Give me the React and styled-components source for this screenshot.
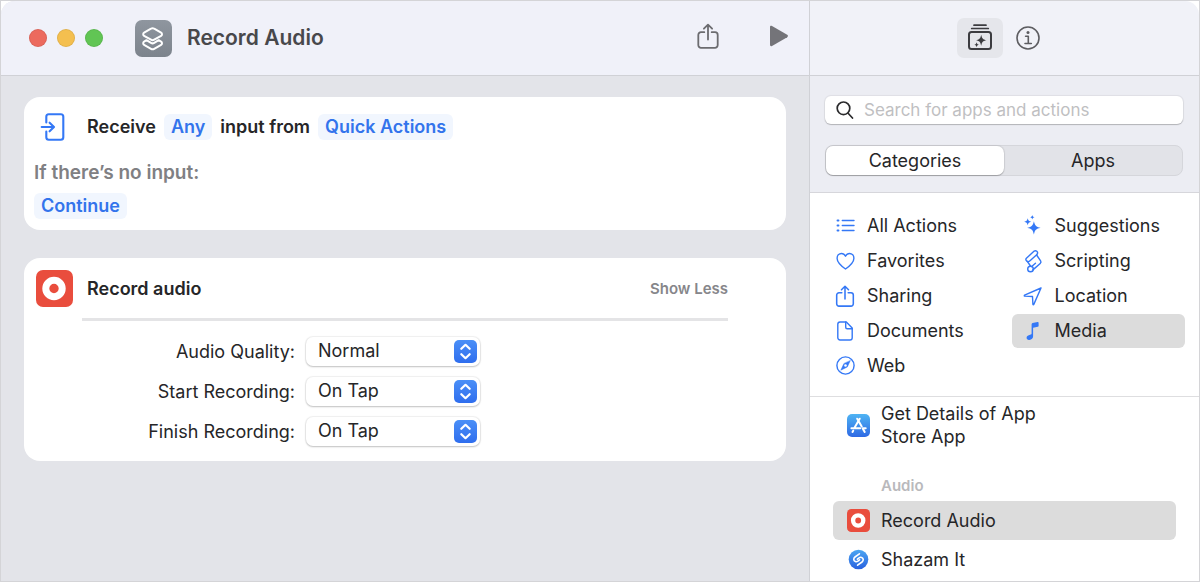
import { useState } from "react";
import styled, { createGlobalStyle } from "styled-components";

const categories = [
  { name: "All Actions", icon: ListIcon },
  { name: "Favorites", icon: HeartIcon },
  { name: "Sharing", icon: ShareIcon },
  { name: "Documents", icon: DocumentIcon },
  { name: "Web", icon: CompassIcon },
  { name: "Suggestions", icon: SparklesIcon },
  { name: "Scripting", icon: ScrollIcon },
  { name: "Location", icon: LocationIcon },
  { name: "Media", icon: NoteIcon },
];

const settings = [
  { id: "quality", label: "Audio Quality:", options: ["Normal", "Very High"] },
  { id: "start", label: "Start Recording:", options: ["On Tap", "Immediately"] },
  { id: "finish", label: "Finish Recording:", options: ["On Tap", "After Time"] },
];

export default function App() {
  const [tab, setTab] = useState("Categories");
  const [category, setCategory] = useState("Media");
  const [action, setAction] = useState("Record Audio");

  return (
    <>
      <GlobalStyle />
      <Window>
        <Editor>
          <TitleBar>
            <Lights>
              <Light color="#ec6a5e" aria-label="Close" />
              <Light color="#f4bf4f" aria-label="Minimize" />
              <Light color="#61c554" aria-label="Zoom" />
            </Lights>
            <ShortcutIcon />
            <Title>Record Audio</Title>
            <ToolButtons>
              <IconButton aria-label="Share">
                <ShareIcon size={28} color="#6c6c70" />
              </IconButton>
              <IconButton aria-label="Run">
                <PlayIcon />
              </IconButton>
            </ToolButtons>
          </TitleBar>

          <Canvas>
            <InputCard>
              <Sentence>
                <InputIcon />
                <span>Receive</span>
                <Token>Any</Token>
                <span>input from</span>
                <Token>Quick Actions</Token>
              </Sentence>
              <NoInput>If there’s no input:</NoInput>
              <Token>Continue</Token>
            </InputCard>

            <ActionCard>
              <ActionHeader>
                <RecordIcon size={37} />
                <ActionName>Record audio</ActionName>
                <ShowLess>Show Less</ShowLess>
              </ActionHeader>
              <Divider />
              <Settings>
                {settings.map((s) => (
                  <Setting key={s.id}>
                    <label htmlFor={s.id}>{s.label}</label>
                    <SelectBox>
                      <Select id={s.id}>
                        {s.options.map((o) => (
                          <option key={o}>{o}</option>
                        ))}
                      </Select>
                      <Stepper>
                        <StepperIcon />
                      </Stepper>
                    </SelectBox>
                  </Setting>
                ))}
              </Settings>
            </ActionCard>
          </Canvas>
        </Editor>

        <Sidebar>
          <SideBar>
            <LibraryButton aria-label="Action library">
              <LibraryIcon />
            </LibraryButton>
            <IconButton aria-label="Details">
              <InfoIcon />
            </IconButton>
          </SideBar>

          <Filters>
            <Search>
              <SearchIcon />
              <SearchInput
                aria-label="Search for apps and actions"
                placeholder="Search for apps and actions"
              />
            </Search>
            <Segments>
              {["Categories", "Apps"].map((name) => (
                <Segment
                  key={name}
                  $active={tab === name}
                  onClick={() => setTab(name)}
                >
                  {name}
                </Segment>
              ))}
            </Segments>
          </Filters>

          <Categories>
            {categories.map(({ name, icon: Icon }) => (
              <Category
                key={name}
                $active={category === name}
                onClick={() => setCategory(name)}
              >
                <Icon />
                {name}
              </Category>
            ))}
          </Categories>

          <Actions>
            <Action
              $active={action === "App Store"}
              onClick={() => setAction("App Store")}
            >
              <AppStoreIcon />
              <ActionLabel>Get Details of App Store App</ActionLabel>
            </Action>
            <GroupName>Audio</GroupName>
            <Action
              $active={action === "Record Audio"}
              onClick={() => setAction("Record Audio")}
            >
              <RecordIcon size={23} />
              <ActionLabel>Record Audio</ActionLabel>
            </Action>
            <Action
              $active={action === "Shazam It"}
              onClick={() => setAction("Shazam It")}
            >
              <ShazamIcon />
              <ActionLabel>Shazam It</ActionLabel>
            </Action>
          </Actions>
        </Sidebar>
      </Window>
    </>
  );
}

function Line({ size = 20, box = 20, color = "#3478f6", width = 1.4, children }) {
  return (
    <svg
      width={size}
      height={size}
      viewBox={`0 0 ${box} ${box}`}
      fill="none"
      stroke={color}
      strokeWidth={width}
      strokeLinecap="round"
      strokeLinejoin="round"
      aria-hidden="true"
    >
      {children}
    </svg>
  );
}

function ListIcon() {
  return (
    <Line>
      <path d="M2.500 4.500h1M2.500 9.500h1M2.500 14.500h1" strokeWidth="1.900" />
      <path d="M7.300 4.500h11.700M7.300 9.500h11.700M7.300 14.500h11.700" />
    </Line>
  );
}

function HeartIcon() {
  return (
    <Line>
      <path d="M10.500 18C7 15.500 2.100 11.800 2.100 7.200 2.100 4.500 4 2.500 6.400 2.500c1.800 0 3.200 1 4.100 2.700.9-1.700 2.300-2.700 4.100-2.700 2.400 0 4.300 2 4.300 4.700C18.900 11.800 14 15.500 10.500 18z" />
    </Line>
  );
}

function ShareIcon({ size = 24, color }) {
  return (
    <Line size={size} box={28} color={color} width={1.8}>
      <path d="M10.300 10.200H7a2.700 2.700 0 0 0-2.700 2.700v10.200A2.700 2.700 0 0 0 7 25.800h14a2.700 2.700 0 0 0 2.700-2.700V12.900a2.700 2.700 0 0 0-2.700-2.700h-3.300" />
      <path d="M14 17.500V3M9.900 6.700 14 2.700l4.100 4" />
    </Line>
  );
}

function DocumentIcon() {
  return (
    <Line>
      <path d="M11.300 1H5a2.200 2.200 0 0 0-2.200 2.200v13.600A2.200 2.200 0 0 0 5 19h10a2.200 2.200 0 0 0 2.200-2.200V7z" />
      <path d="M10.700 1v5.200A1.500 1.500 0 0 0 12.200 7.700h5" />
    </Line>
  );
}

function CompassIcon() {
  return (
    <Line>
      <circle cx="10.500" cy="9.500" r="8.600" />
      <path d="M15.200 4.800 12.300 11 5.800 14.200 8.800 7.800z" fill="#3478f6" strokeWidth=".5" />
      <circle cx="10.500" cy="9.500" r="1.300" fill="#fff" stroke="none" />
    </Line>
  );
}

function SparklesIcon() {
  return (
    <svg width="22" height="22" viewBox="-1 -1 22 22" fill="#3478f6" aria-hidden="true">
      <path d="M10.900 5.200c1.100 4.500 2.100 5.500 6.700 6.600-4.600 1.100-5.600 2.100-6.700 6.700-1.100-4.600-2.100-5.600-6.700-6.700 4.600-1.100 5.600-2.100 6.700-6.600z" />
      <path d="M4.700 2.300c.6 2.300 1.200 2.900 3.500 3.500-2.300.6-2.900 1.200-3.500 3.500-.6-2.300-1.200-2.900-3.500-3.500 2.300-.6 2.900-1.200 3.500-3.500z" />
      <path d="M9.300-1c.4 1.500.8 1.800 2.300 2.200-1.500.4-1.900.8-2.300 2.300-.4-1.500-.8-1.900-2.300-2.300 1.500-.4 1.900-.7 2.300-2.200z" />
    </svg>
  );
}

function ScrollIcon() {
  return (
    <Line size={24} box={24}>
      <path d="M5.400 9.200 13.200 2.100c1.700-1.300 4.200.9 3.100 2.800-.2.400-.6.700-.9 1L9 11.800c-1.100 1-2.400 1-3.300.1-.9-.8-1-1.900-.3-2.700z" />
      <path d="m15.600 6 4 5.900c.6.900.4 1.900-.4 2.600l-7.300 6.400" />
      <path d="m6.300 12.400 3.200 4.600" />
      <circle cx="9.500" cy="20" r="2.800" />
      <path d="m10.700 17.500 3.800-3.300" />
    </Line>
  );
}

function LocationIcon() {
  return (
    <Line>
      <path d="M18 2 1.600 9.200c-.5.300-.4.900.2.900l7.700.4.400 7.700c0 .6.600.7.900.2z" />
    </Line>
  );
}

function NoteIcon() {
  return (
    <svg width="20" height="20" viewBox="0 0 20 20" fill="#3478f6" aria-hidden="true">
      <path d="M8.600 3.300c0-.7.400-1.100 1-1.300l5-1.100c.6-.1 1 .2 1 .8v3.200c0 .5-.3.800-.8.900l-4.700 1v8.500c0 2-1.500 3.400-3.700 3.700-1.700.2-2.800-.8-2.800-2.200 0-1.600 1.100-2.500 2.800-2.900l1.300-.3c.6-.1.900-.4.900-1z" />
    </svg>
  );
}

function ShortcutIcon() {
  return (
    <svg width="37" height="37" viewBox="0 0 37 37" fill="none" aria-hidden="true">
      <defs>
        <linearGradient id="shortcut" x2="0" y2="1">
          <stop stopColor="#8f969f" />
          <stop offset="1" stopColor="#7c838c" />
        </linearGradient>
      </defs>
      <rect width="37" height="37" rx="7" fill="url(#shortcut)" />
      <g stroke="#fff" strokeWidth="2" strokeLinejoin="round">
        <path d="m16 8.700-6.900 3.900c-1.200.7-1.200 2.500 0 3.200l6.900 3.900c1 .6 2.200.6 3.200 0l6.900-3.900c1.200-.7 1.200-2.500 0-3.200l-6.900-3.900c-1-.6-2.200-.6-3.200 0z" />
        <path d="m11.500 20.200-2.400 1.400c-1.200.7-1.200 2.500 0 3.200l6.900 4c1 .6 2.200.6 3.200 0l6.900-4c1.200-.7 1.200-2.500 0-3.200l-2.400-1.400-4.500 2.700c-1 .6-2.200.6-3.200 0z" />
      </g>
    </svg>
  );
}

function PlayIcon() {
  return (
    <svg width="20" height="22" viewBox="0 0 20 22" fill="#747479" aria-hidden="true">
      <path d="M1 2.200C1 .9 2 .6 3 1.100l15.200 8.700c1 .6 1 1.800 0 2.400L3 20.900c-1 .5-2 .2-2-1.100z" />
    </svg>
  );
}

function InputIcon() {
  return (
    <Line size={30} box={30} width={2.1}>
      <path d="M8.300 10.500V4.700a2.500 2.500 0 0 1 2.500-2.500h12a2.500 2.500 0 0 1 2.500 2.500v20.600a2.500 2.500 0 0 1-2.500 2.500h-12a2.500 2.500 0 0 1-2.500-2.500v-5.800" />
      <path d="M3.700 15h12M11.600 10.700 16 15l-4.400 4.300" />
    </Line>
  );
}

function RecordIcon({ size }) {
  return (
    <svg width={size} height={size} viewBox="0 0 37 37" aria-hidden="true">
      <rect width="37" height="37" rx="7" fill="#e94d3d" />
      <circle cx="18" cy="18.500" r="8.200" fill="none" stroke="#fff" strokeWidth="7" />
    </svg>
  );
}

function StepperIcon() {
  return (
    <Line size={23} box={23} color="#fff" width={2.2}>
      <path d="m7.300 8.800 4.200-4 4.200 4M7.300 14.200l4.200 4 4.200-4" />
    </Line>
  );
}

function LibraryIcon() {
  return (
    <Line size={28} box={28} color="#3c3c40" width={2}>
      <rect x="3" y="8" width="22" height="17" rx="2.500" />
      <path d="M5.700 4.500h16.600M8 1.200h12" strokeWidth="1.700" />
      <path
        d="M15.200 10.700c.9 3.900 1.600 4.600 5.200 5.500-3.600.9-4.300 1.600-5.200 5.500-.9-3.900-1.600-4.600-5.200-5.500 3.600-.9 4.300-1.600 5.200-5.500zM10.600 18.200c.4 1.700.8 2.100 2.400 2.500-1.600.4-2 .8-2.400 2.500-.4-1.700-.8-2.100-2.400-2.500 1.600-.4 2-.8 2.400-2.500z"
        fill="#3c3c40"
        stroke="none"
      />
    </Line>
  );
}

function InfoIcon() {
  return (
    <Line size={24} box={24} color="#5d5d61" width={1.6}>
      <circle cx="12" cy="12" r="11" />
      <path d="M9.600 10.200h2.700v7.200M9 17.500h6.300" />
      <circle cx="12" cy="6.500" r="1.500" fill="#5d5d61" stroke="none" />
    </Line>
  );
}

function SearchIcon() {
  return (
    <Line size={20} box={20} color="#2a2a2c" width={1.7}>
      <circle cx="8.500" cy="8.300" r="6.300" />
      <path d="m13.100 13.200 4.400 4.800" />
    </Line>
  );
}

function AppStoreIcon() {
  return (
    <svg width="23" height="23" viewBox="0 0 23 23" fill="none" aria-hidden="true">
      <defs>
        <linearGradient id="store" x2="0" y2="1">
          <stop stopColor="#4fb4f3" />
          <stop offset="1" stopColor="#2e69e4" />
        </linearGradient>
      </defs>
      <rect width="23" height="23" rx="5" fill="url(#store)" />
      <path
        d="m12.700 4.700-5.500 9.500M6.200 16.700l-.7 1.200M10.200 4.700l4.500 7.700M15.700 14.400l2 3.500M4.400 14.200h8.800M16.300 14.200h2.400"
        stroke="#fff"
        strokeWidth="2"
        strokeLinecap="round"
      />
    </svg>
  );
}

function ShazamIcon() {
  return (
    <svg width="23" height="23" viewBox="0 0 23 23" fill="none" aria-hidden="true">
      <defs>
        <linearGradient id="shazam" x2="0" y2="1">
          <stop stopColor="#4ba6f2" />
          <stop offset="1" stopColor="#2861df" />
        </linearGradient>
      </defs>
      <circle cx="11.500" cy="11.500" r="9.800" fill="url(#shazam)" />
      <path
        d="M12.400 5.800 8 9c-1.900 1.500-1.500 3.800.4 4.500 1 .4 1.900.1 2.600-.5l1.600-1.200M10.600 17.200 15 14c1.900-1.500 1.500-3.800-.4-4.500-1-.4-1.900-.1-2.600.5l-1.600 1.200"
        stroke="#fff"
        strokeWidth="1.600"
        strokeLinecap="round"
      />
    </svg>
  );
}

const GlobalStyle = createGlobalStyle`
  * {
    box-sizing: border-box;
  }

  body {
    margin: 0;
    background-color: white;
    color: #262628;
    font-family: Inter, "Liberation Sans", sans-serif;
    font-size: 18px;
    line-height: 22px;
  }

  button, input, select {
    margin: 0;
    padding: 0;
    border: none;
    background: none;
    color: inherit;
    font: inherit;
  }

  svg {
    display: block;
    flex-shrink: 0;
  }
`;

const Window = styled.div`
  min-height: 100vh;
  display: grid;
  grid-template-columns: minmax(0, 1fr) 390px;
  border: 1px solid #d4d4d7;
`;

const Editor = styled.main`
  display: flex;
  flex-direction: column;
  background-color: #e3e4e9;
  border-top-left-radius: 14px;
`;

const TitleBar = styled.header`
  height: 75px;
  display: flex;
  align-items: center;
  padding: 0 20px 0 28px;
  background-color: #f0f1f9;
  border-bottom: 1px solid #d0d1d6;
  border-top-left-radius: 14px;
`;

const Lights = styled.div`
  display: flex;
  gap: 10px;
  margin-right: 32px;
`;

const Light = styled.button`
  width: 18px;
  height: 18px;
  border-radius: 50%;
  background-color: ${(props) => props.color};
  box-shadow: inset 0 0 0 1px rgba(0, 0, 0, 0.08);
`;

const Title = styled.h1`
  margin: 0 0 0 15px;
  font-size: 21px;
  font-weight: 600;
  color: #48484b;
`;

const ToolButtons = styled.div`
  display: flex;
  align-items: center;
  gap: 47px;
  margin-left: auto;
  padding-bottom: 4px;
`;

const IconButton = styled.button`
  display: flex;
`;

const Canvas = styled.div`
  flex: 1;
  display: flex;
  flex-direction: column;
  gap: 28px;
  padding: 21px 23px;
`;

const Card = styled.section`
  border-radius: 16px;
  background-color: white;
`;

const InputCard = styled(Card)`
  padding: 15px 10px 11px;
  font-weight: 600;
`;

const Sentence = styled.div`
  display: flex;
  align-items: center;
  gap: 8px;

  svg {
    margin: 0 11px 0 4px;
  }
`;

const Token = styled.button`
  height: 26px;
  padding: 0 7px;
  border-radius: 6px;
  background-color: #f1f6fe;
  color: #3374ec;
  font-weight: 600;
`;

const NoInput = styled.p`
  margin: 20px 0 9px;
  color: #808083;
  font-size: 19px;
`;

const ActionCard = styled(Card)`
  padding: 12px 58px 15px 12px;
`;

const ActionHeader = styled.div`
  display: flex;
  align-items: center;
`;

const ActionName = styled.h2`
  margin: 0 auto 0 14px;
  font-size: 18px;
  font-weight: 600;
`;

const ShowLess = styled.button`
  color: #86868a;
  font-size: 15px;
  font-weight: 600;
`;

const Divider = styled.hr`
  height: 3px;
  margin: 11px 0 16px 46px;
  border: none;
  background-color: #e4e4e6;
`;

const Settings = styled.div`
  display: grid;
  gap: 11px;
`;

const Setting = styled.div`
  display: grid;
  grid-template-columns: 259px 174px;
  align-items: center;
  gap: 11px;
  text-align: right;
`;

const SelectBox = styled.div`
  position: relative;
`;

const Select = styled.select`
  display: block;
  width: 100%;
  height: 29px;
  padding: 0 32px 2px 12px;
  appearance: none;
  border-radius: 7px;
  background-color: white;
  box-shadow: 0 0 1px 1px rgba(0, 0, 0, 0.06), 0 1px 2px rgba(0, 0, 0, 0.2);
`;

const Stepper = styled.span`
  position: absolute;
  top: 3px;
  right: 3px;
  border-radius: 5px;
  background: linear-gradient(#4a8ff7, #2f6eee);
  pointer-events: none;
`;

const Sidebar = styled.aside`
  display: flex;
  flex-direction: column;
  border-left: 1px solid #d0d1d6;
  border-top-right-radius: 14px;
`;

const SideBar = styled.header`
  height: 75px;
  display: flex;
  align-items: center;
  justify-content: center;
  gap: 13px;
  padding-right: 12px;
  background-color: #f1f2f8;
  border-bottom: 1px solid #d0d1d6;
  border-top-right-radius: 14px;
`;

const LibraryButton = styled(IconButton)`
  padding: 6px 9px;
  border-radius: 7px;
  background-color: #e5e6eb;
`;

const Filters = styled.div`
  display: grid;
  gap: 21px;
  padding: 20px 16px 16px 15px;
  background-color: #ecedf3;
  border-bottom: 1px solid #d6d6db;
`;

const Search = styled.div`
  height: 28px;
  display: flex;
  align-items: center;
  gap: 9px;
  padding: 0 10px;
  border-radius: 6px;
  background-color: white;
  box-shadow: 0 0 1px 1px rgba(0, 0, 0, 0.06), 0 1px 1px rgba(0, 0, 0, 0.2);
`;

const SearchInput = styled.input`
  flex: 1;
  min-width: 0;
  outline: none;
  font-size: 17px;

  &::placeholder {
    color: #bfbfc2;
  }
`;

const Segments = styled.div`
  height: 31px;
  display: grid;
  grid-template-columns: 1fr 1fr;
  border: 1px solid #d5d6db;
  border-radius: 8px;
  background-color: #e2e3e8;
`;

const Segment = styled.button`
  border-radius: 7px;
  background-color: ${(props) => (props.$active ? "white" : "transparent")};
  box-shadow: ${(props) =>
    props.$active ? "0 0 1px 1px rgba(0, 0, 0, 0.08), 0 1px 1px rgba(0, 0, 0, 0.2)" : "none"};
`;

const Categories = styled.div`
  display: grid;
  grid-template-columns: 1fr 1fr;
  grid-template-rows: repeat(5, 34px);
  grid-auto-flow: column;
  gap: 1px 14px;
  padding: 16px 14px 13px;
  border-bottom: 1px solid #dedee0;
`;

const Category = styled.button`
  display: grid;
  grid-template-columns: 20px 1fr;
  align-items: center;
  gap: 12px;
  padding: 0 11px;
  border-radius: 6px;
  background-color: ${(props) => (props.$active ? "#dcdcdc" : "transparent")};
  text-align: left;

  svg {
    justify-self: center;
  }
`;

const Actions = styled.div`
  display: flex;
  flex-direction: column;
  padding: 0 23px;
`;

const Action = styled.button`
  min-height: 39px;
  display: flex;
  align-items: center;
  gap: 11px;
  padding: 5px 14px;
  border-radius: 6px;
  background-color: ${(props) => (props.$active ? "#dcdcdc" : "transparent")};
  line-height: 23px;
  text-align: left;
`;

const ActionLabel = styled.span`
  max-width: 180px;
`;

const GroupName = styled.h3`
  margin: 22px 0 4px 48px;
  color: #b9b9bc;
  font-size: 15px;
  font-weight: 600;
`;
